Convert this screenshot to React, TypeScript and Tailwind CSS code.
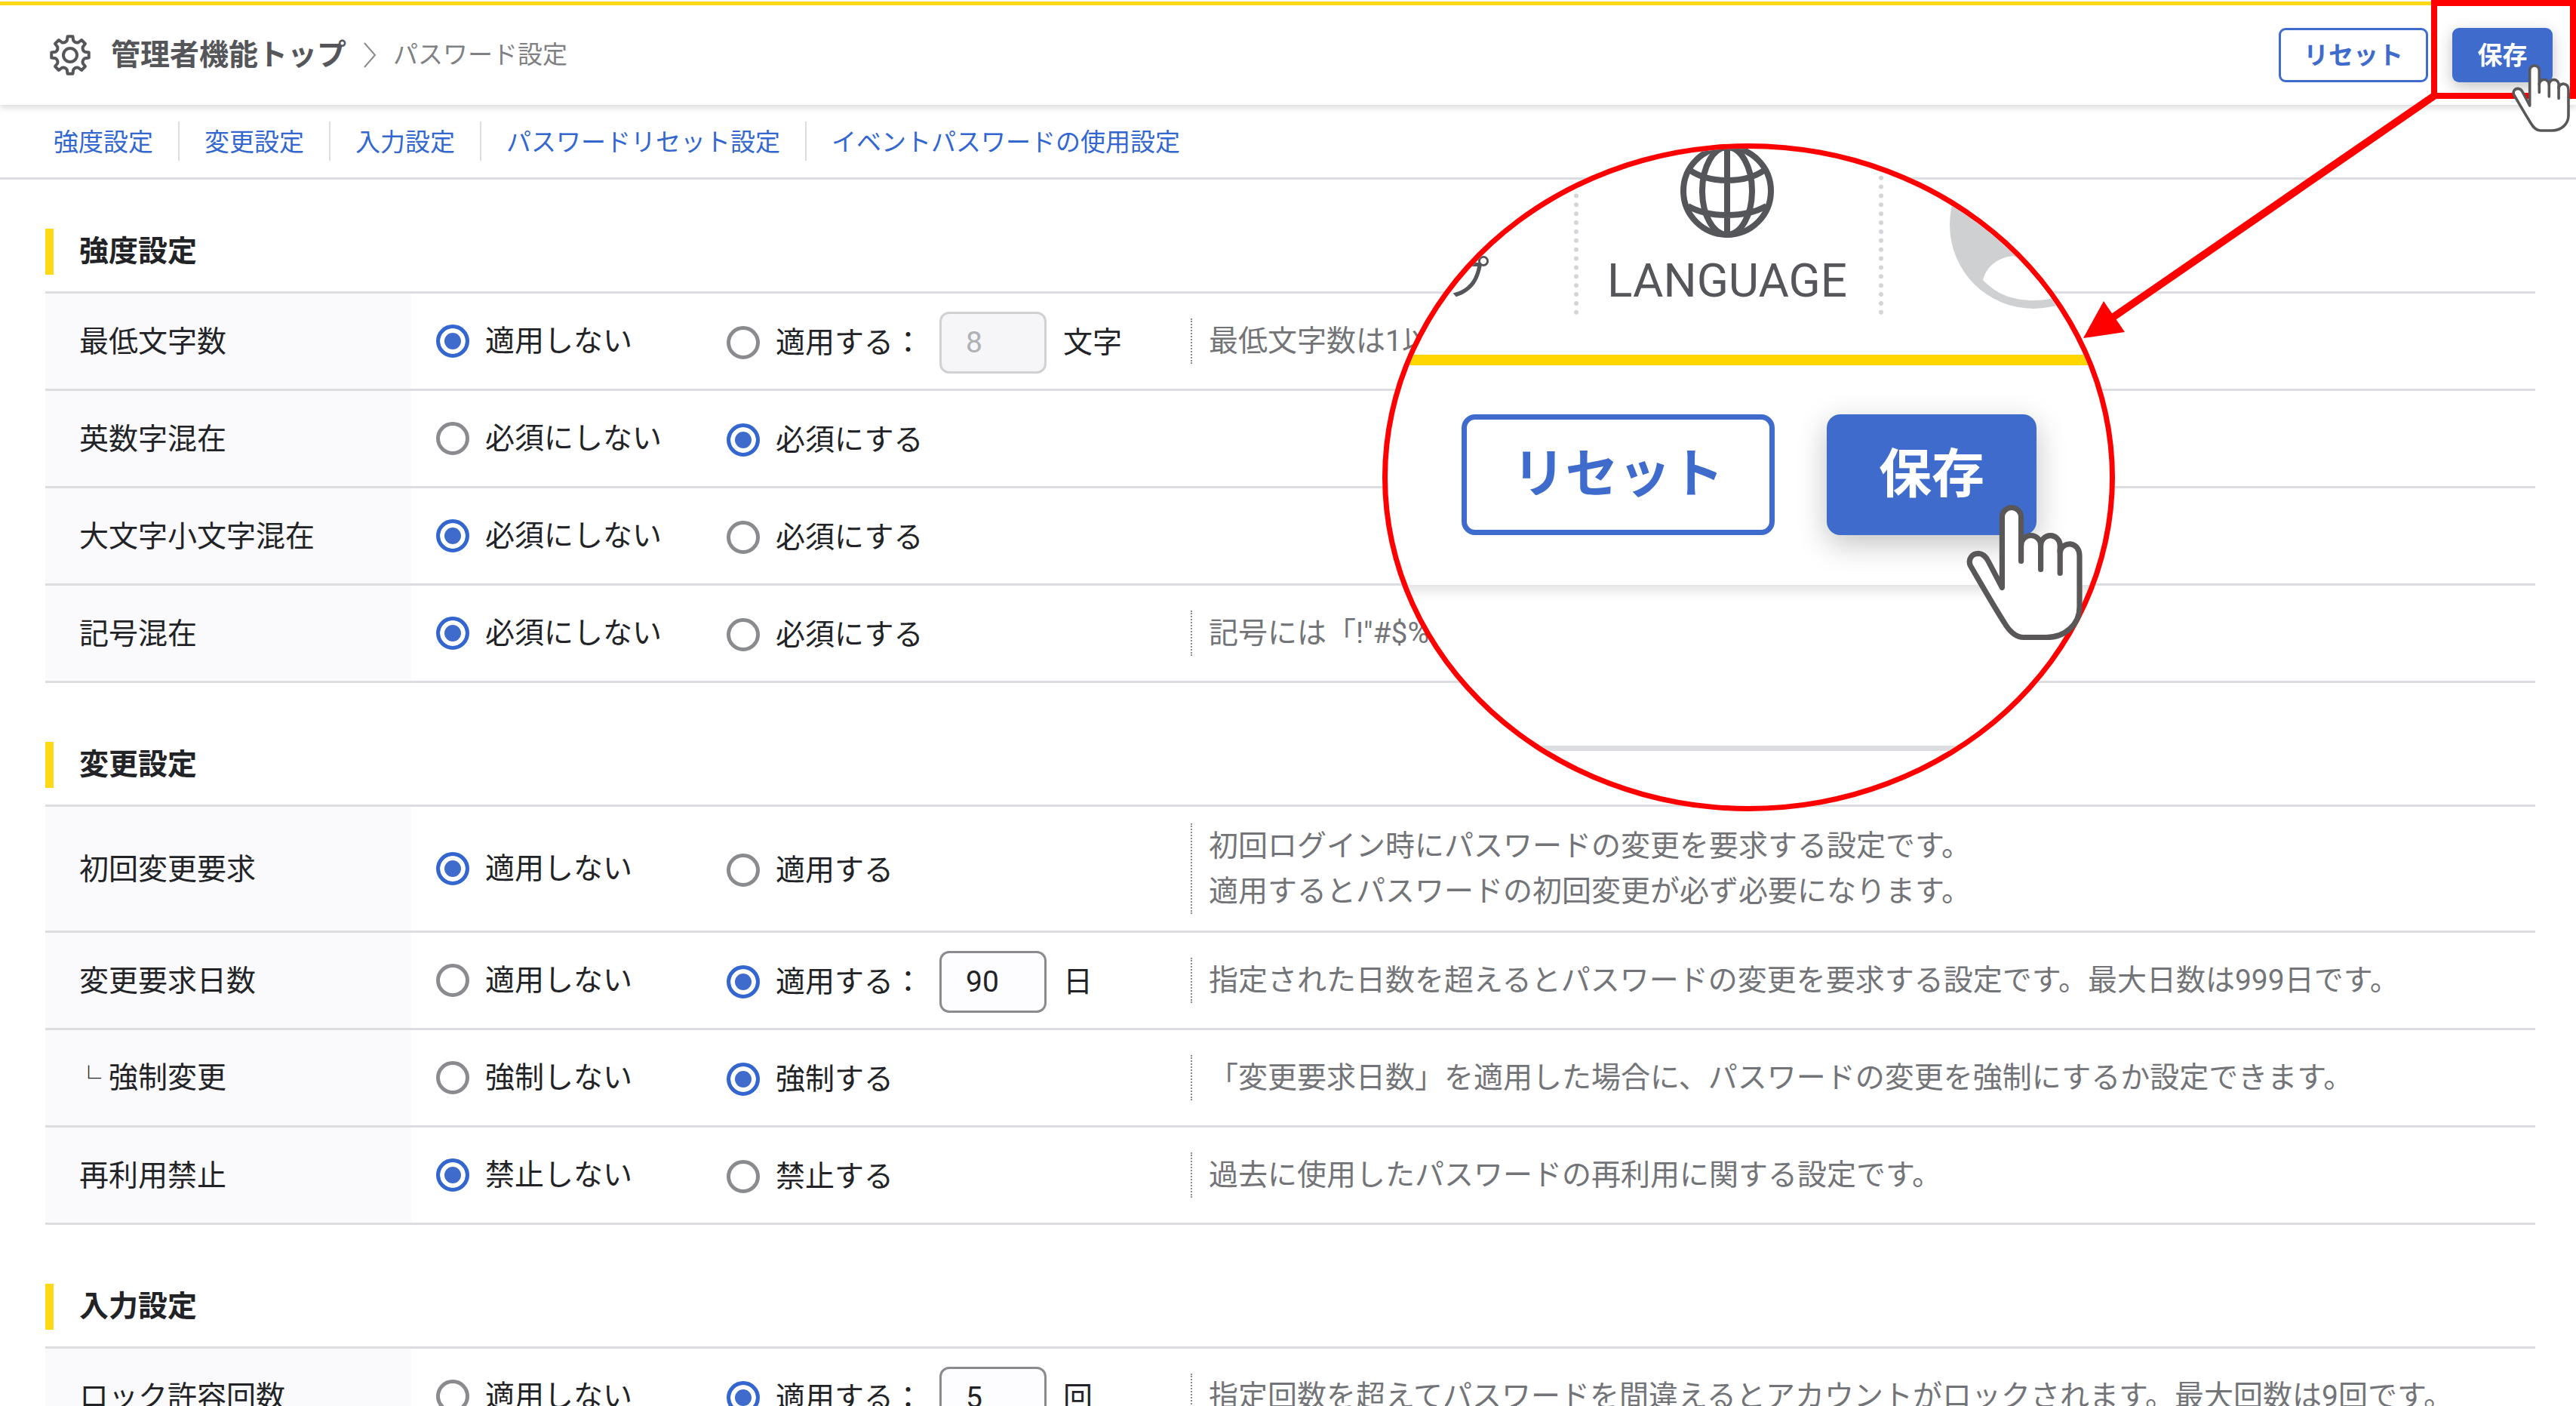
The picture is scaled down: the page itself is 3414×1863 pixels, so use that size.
import React, { useState } from 'react';

interface SettingRow {
  id: string;
  label: string;
  nested?: boolean;
  options: [string, string];
  selected: 0 | 1;
  value?: string;
  unit?: string;
  notes?: string[];
}

interface SettingSection {
  id: string;
  title: string;
  rows: SettingRow[];
}

const NAV_ITEMS = [
  { href: '#strength', label: '強度設定' },
  { href: '#change', label: '変更設定' },
  { href: '#input', label: '入力設定' },
  { href: '#reset', label: 'パスワードリセット設定' },
  { href: '#event', label: 'イベントパスワードの使用設定' },
];

const SECTIONS: SettingSection[] = [
  {
    id: 'strength',
    title: '強度設定',
    rows: [
      {
        id: 'min-length',
        label: '最低文字数',
        options: ['適用しない', '適用する：'],
        selected: 0,
        value: '8',
        unit: '文字',
        notes: ['最低文字数は1以上で設定できます。'],
      },
      { id: 'alnum', label: '英数字混在', options: ['必須にしない', '必須にする'], selected: 1 },
      { id: 'case', label: '大文字小文字混在', options: ['必須にしない', '必須にする'], selected: 0 },
      {
        id: 'symbol',
        label: '記号混在',
        options: ['必須にしない', '必須にする'],
        selected: 0,
        notes: ['記号には「!"#$%&」などが使用できます。'],
      },
    ],
  },
  {
    id: 'change',
    title: '変更設定',
    rows: [
      {
        id: 'first-change',
        label: '初回変更要求',
        options: ['適用しない', '適用する'],
        selected: 0,
        notes: ['初回ログイン時にパスワードの変更を要求する設定です。', '適用するとパスワードの初回変更が必ず必要になります。'],
      },
      {
        id: 'change-days',
        label: '変更要求日数',
        options: ['適用しない', '適用する：'],
        selected: 1,
        value: '90',
        unit: '日',
        notes: ['指定された日数を超えるとパスワードの変更を要求する設定です。最大日数は999日です。'],
      },
      {
        id: 'force-change',
        label: '強制変更',
        nested: true,
        options: ['強制しない', '強制する'],
        selected: 1,
        notes: ['「変更要求日数」を適用した場合に、パスワードの変更を強制にするか設定できます。'],
      },
      {
        id: 'reuse',
        label: '再利用禁止',
        options: ['禁止しない', '禁止する'],
        selected: 0,
        notes: ['過去に使用したパスワードの再利用に関する設定です。'],
      },
    ],
  },
  {
    id: 'input',
    title: '入力設定',
    rows: [
      {
        id: 'lock-count',
        label: 'ロック許容回数',
        options: ['適用しない', '適用する：'],
        selected: 1,
        value: '5',
        unit: '回',
        notes: ['指定回数を超えてパスワードを間違えるとアカウントがロックされます。最大回数は9回です。'],
      },
    ],
  },
];

const polar = (radius: number, degrees: number) => {
  const rad = ((degrees - 90) * Math.PI) / 180;
  return `${(28 + radius * Math.cos(rad)).toFixed(2)} ${(28 + radius * Math.sin(rad)).toFixed(2)}`;
};

// Eight teeth, joined by rounded valleys
const GEAR_PATH =
  [0, 45, 90, 135, 180, 225, 270, 315]
    .map((a, i) => `${i === 0 ? 'M' : 'L'}${polar(25, a - 8)}L${polar(25, a + 8)}L${polar(20, a + 12)}Q${polar(17, a + 22.5)} ${polar(20, a + 33)}`)
    .join('') + 'Z';

function GearIcon() {
  return (
    <svg viewBox="0 0 56 56" className="size-14 shrink-0" fill="none" stroke="#55565a" strokeWidth="4" strokeLinejoin="round">
      <path d={GEAR_PATH} />
      <circle cx="28" cy="28" r="9" />
    </svg>
  );
}

function HandCursor({ className }: { className: string }) {
  return (
    <svg viewBox="0 0 77 90" className={className} stroke="#595757" strokeWidth="3.600" strokeLinecap="round" strokeLinejoin="round">
      <path
        fill="#fff"
        d="M23.700 55V8.300a6.300 6.300 0 0 1 12.600 0V27a6.500 6.500 0 0 1 13 0a6.400 6.400 0 0 1 12.800 0V31.500C63 27.500 66 26 69 26.200C73 26.800 75 30 75 34V68C75 79 66 88 53 88H38C33 88 28.500 84 25 78C18 67 10 53 2.700 40.500C0.800 36 4 32.400 8 32.400C11 32.500 13 34.500 14.500 37.500Z"
      />
      <path fill="none" d="M36.300 26V37.500M49.300 26V43M62.100 30V45.500" />
    </svg>
  );
}

function GlobeIcon() {
  return (
    <svg viewBox="0 0 128 128" className="-mt-2 size-32" fill="none" stroke="#55565a" strokeWidth="8">
      <circle cx="64" cy="64" r="58" />
      <ellipse cx="64" cy="64" rx="33" ry="58" />
      <path d="M64 6v116M14 36c14 10 31 14 50 14s36-4 50-14M12 84c14 8 31 12 52 12s38-4 52-12" />
    </svg>
  );
}

function AvatarIcon() {
  return (
    <svg viewBox="0 0 222 222" className="size-[222px]">
      <circle cx="111" cy="111" r="111" fill="#cfd0d2" />
      <circle cx="111" cy="92" r="42" fill="#fff" />
      <path d="M44 184C50 162 68 154 84 152C100 160 122 160 138 152C156 154 172 162 178 184C160 203 138 211 111 211S62 203 44 184Z" fill="#fff" />
    </svg>
  );
}

function Radio({ name, label, checked, onChange }: { name: string; label: string; checked: boolean; onChange: () => void }) {
  return (
    <label className="flex items-center gap-[21px] whitespace-nowrap">
      <input
        type="radio"
        name={name}
        checked={checked}
        onChange={onChange}
        className="size-11 shrink-0 appearance-none rounded-full border-[5px] border-[#8a8b8e] bg-white checked:border-[#3367cf] checked:bg-[#3f6ccc] checked:shadow-[inset_0_0_0_6px_white]"
      />
      <span>{label}</span>
    </label>
  );
}

function SettingTableRow({ row }: { row: SettingRow }) {
  const [selected, setSelected] = useState<number>(row.selected);
  const [value, setValue] = useState(row.value ?? '');

  return (
    <tr className="h-[129px]">
      <th scope="row" className="border-b-[3px] border-[#dcdde0] bg-[#fafafc] pt-[2px] pl-[45px] text-left font-normal whitespace-nowrap">
        {row.nested && <span className="-ml-1 inline-block w-[43px] text-[33px] font-bold">└</span>}
        {row.label}
      </th>
      <td className="border-b-[3px] border-[#dcdde0] pl-[33px]">
        <Radio name={row.id} label={row.options[0]} checked={selected === 0} onChange={() => setSelected(0)} />
      </td>
      <td className="border-b-[3px] border-[#dcdde0] pt-[3px]">
        <div className="flex items-center gap-[22px]">
          <Radio name={row.id} label={row.options[1]} checked={selected === 1} onChange={() => setSelected(1)} />
          {row.value && (
            <label className="flex items-center gap-[22px]">
              <input
                type="text"
                aria-label={row.label}
                value={value}
                disabled={selected === 0}
                onChange={(e) => setValue(e.target.value)}
                className="h-[82px] w-[142px] rounded-[13px] border-[3px] border-[#8a8b8e] bg-[#fdfdff] px-8 disabled:border-[#d0d1d3] disabled:bg-[#f6f6f9] disabled:text-[#b0b1b4]"
              />
              <span>{row.unit}</span>
            </label>
          )}
        </div>
      </td>
      <td className="border-b-[3px] border-[#dcdde0] py-[22px]">
        {row.notes && (
          <div className="border-l-2 border-dotted border-[#8a8b8e] pl-[22px] text-[#737478]">
            {row.notes.map((note) => (
              <p key={note} className="whitespace-nowrap">{note}</p>
            ))}
          </div>
        )}
      </td>
    </tr>
  );
}

function Section({ section }: { section: SettingSection }) {
  return (
    <section id={section.id}>
      <h2 className="mb-[22px] border-l-[11px] border-[#ffd816] pl-[34px] leading-[61px] font-bold">{section.title}</h2>
      <table className="w-full table-fixed border-separate border-spacing-0 border-t-[3px] border-[#dcdde0]">
        <colgroup>
          <col className="w-[485px]" />
          <col className="w-[418px]" />
          <col className="w-[615px]" />
          <col />
        </colgroup>
        <tbody>
          {section.rows.map((row) => (
            <SettingTableRow key={row.id} row={row} />
          ))}
        </tbody>
      </table>
    </section>
  );
}

// Enlarged view of the header's right end
function Magnifier() {
  return (
    <div className="absolute top-[190px] right-[611px] h-[885px] w-[971px] overflow-hidden rounded-[50%] border-[7px] border-[#ff0000] bg-white">
      <div className="flex h-[273px] items-start text-[62px] leading-[80px] text-[#55565a]">
        <div className="flex h-[220px] w-[253px] shrink-0 items-end justify-end border-r-[6px] border-dotted border-[#d4d5d8] pr-28 pb-[7px] whitespace-nowrap">
          ヘルプ
        </div>
        <div className="flex h-[220px] w-[404px] shrink-0 flex-col items-center border-r-[6px] border-dotted border-[#d4d5d8] pr-1">
          <GlobeIcon />
          <span className="mt-[15px]">LANGUAGE</span>
        </div>
        <div className="-mt-[10px] ml-[88px] shrink-0">
          <AvatarIcon />
        </div>
      </div>
      <div className="flex gap-[69px] border-t-[14px] border-[#ffd600] px-[98px] pt-[65px] pb-[66px] text-[70px] leading-[70px] font-bold shadow-[0_8px_16px_rgba(0,0,0,0.12)]">
        <button type="button" className="h-[160px] w-[415px] shrink-0 rounded-[18px] border-[7px] border-[#3f6ccc] bg-white text-[#3f6ccc]">
          リセット
        </button>
        <button type="button" className="h-[160px] w-[278px] shrink-0 rounded-[18px] bg-[#3f6ccc] text-white shadow-[0_12px_40px_rgba(0,0,0,0.24)]">
          保存
        </button>
      </div>
      <div className="h-[220px] border-b-[7px] border-[#dcdde0]" />
    </div>
  );
}

function Callout() {
  return (
    <div className="pointer-events-none absolute top-0 right-0">
      <div className="absolute top-0 right-0 h-[131px] w-48 border-8 border-[#ff0000]" />
      <Magnifier />
      <svg viewBox="0 0 480 340" className="absolute top-[120px] right-[180px] h-[340px] w-[480px] max-w-none">
        <path d="M472 7L44 302" stroke="#ff0000" strokeWidth="10" />
        <path d="M7 328L34 279L62 320Z" fill="#ff0000" />
      </svg>
      <HandCursor className="absolute top-[85px] right-2 h-[90px] w-[77px] max-w-none" />
      <HandCursor className="absolute top-[668px] right-[654px] h-[181px] w-[154px] max-w-none" />
    </div>
  );
}

export default function App() {
  return (
    <div className="relative h-screen overflow-hidden bg-white pt-[2px] font-[Roboto,'Noto_Sans_CJK_JP',sans-serif] text-[39px] leading-[60px] text-[#222326]">
      <header className="flex items-center justify-between border-t-[5px] border-[#ffd816] py-[30px] pr-[31px] pl-[65px] shadow-[0_4px_8px_rgba(0,0,0,0.14)]">
        <nav aria-label="パンくずリスト" className="flex items-center">
          <GearIcon />
          <a href="#top" className="ml-[26px] font-bold text-[#55565a]">管理者機能トップ</a>
          <svg viewBox="0 0 18 34" className="mx-[22px] h-[34px] w-[18px]" fill="none" stroke="#8a8b8e" strokeWidth="2">
            <path d="M2 1l14 16L2 33" />
          </svg>
          <span className="text-[33px] text-[#808185]">パスワード設定</span>
        </nav>
        <div className="flex gap-8 text-[33px] leading-[33px] font-bold">
          <button type="button" className="h-[72px] w-[198px] rounded-[9px] border-[3px] border-[#3f6ccc] bg-white text-[#3f6ccc]">
            リセット
          </button>
          <button type="button" className="h-[72px] w-[133px] rounded-[9px] bg-[#3f6ccc] text-white shadow-[0_6px_20px_rgba(0,0,0,0.24)]">
            保存
          </button>
        </div>
      </header>

      <nav aria-label="ページ内リンク" className="flex border-b-[3px] border-[#dcdde0] py-[22px] pl-[38px] text-[33px] leading-[49px] text-[#3367cf]">
        {NAV_ITEMS.map((item) => (
          <a key={item.href} href={item.href} className="border-r-2 border-[#dcdde0] px-[33px] pt-[3px] last:border-r-0">
            {item.label}
          </a>
        ))}
      </nav>

      <main className="flex flex-col gap-[78px] pt-[65px] pr-[54px] pl-[60px]">
        {SECTIONS.map((section) => (
          <Section key={section.id} section={section} />
        ))}
      </main>

      <Callout />
    </div>
  );
}
